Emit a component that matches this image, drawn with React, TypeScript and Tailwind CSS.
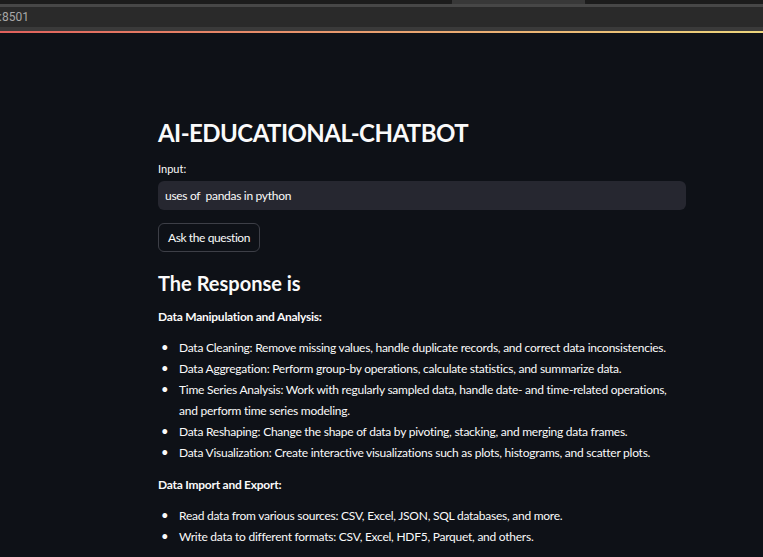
export default function App() {
  const items1 = [
    "Data Cleaning: Remove missing values, handle duplicate records, and correct data inconsistencies.",
    "Data Aggregation: Perform group-by operations, calculate statistics, and summarize data.",
    "Time Series Analysis: Work with regularly sampled data, handle date- and time-related operations, and perform time series modeling.",
    "Data Reshaping: Change the shape of data by pivoting, stacking, and merging data frames.",
    "Data Visualization: Create interactive visualizations such as plots, histograms, and scatter plots.",
  ];
  const items2 = [
    "Read data from various sources: CSV, Excel, JSON, SQL databases, and more.",
    "Write data to different formats: CSV, Excel, HDF5, Parquet, and others.",
  ];
  return (
    <div className="w-[763px] h-[557px] overflow-hidden bg-[#0e1117] font-['Lato',sans-serif] text-[#fafafa]">
      {/* browser chrome */}
      <div className="h-[4px] flex bg-[#1f1f1f]">
        <div className="w-[452px] bg-[#1c1c1c] rounded-br-[4px]" />
        <div className="w-[133px] bg-[#383838]" />
        <div className="flex-1 bg-[#1c1c1c] rounded-bl-[4px]" />
      </div>
      <div className="h-[3px] bg-[#474747]" />
      <div className="h-[20px] bg-[#2a2a2a] flex items-center">
        <span className="text-[12px] text-[#a8a8a8] font-['Roboto',sans-serif] leading-none -ml-[1px]">:8501</span>
      </div>
      <div className="h-[4px] bg-[#3a3a3a]" />
      <div className="h-[2px] bg-gradient-to-r from-[#e0605c] via-[#e8a070] to-[#ecd57c]" />

      {/* content */}
      <div className="pl-[158px]">
        <div className="w-[528px] flex flex-col">
          <h1 className="mt-[85px] text-[24px] leading-[30px] font-bold tracking-[-0.55px]">AI-EDUCATIONAL-CHATBOT</h1>
          <div className="mt-[14px] text-[11px] leading-[14px]">Input:</div>
          <div className="mt-[5px] h-[29px] rounded-[6px] bg-[#262730] flex items-center px-[7px] text-[12px] tracking-[-0.3px] whitespace-pre">uses of  pandas in python</div>
          <button className="mt-[13px] self-start h-[29px] w-[102px] rounded-[6px] border border-[#3d3f47] bg-transparent text-[12px] tracking-[-0.4px] text-[#fafafa]">Ask the question</button>
          <h2 className="mt-[19px] text-[20px] leading-[24px] font-bold">The Response is</h2>
          <div className="mt-[14px] text-[12px] leading-[16px] font-bold tracking-[-0.25px]">Data Manipulation and Analysis:</div>
          <ul className="mt-[12px] text-[12px] leading-[21px] tracking-[-0.25px] pl-[21px]">
            {items1.map((t) => (
              <li key={t} className="relative">
                <span className="absolute -left-[18px] top-0 text-[13px]">•</span>
                {t}
              </li>
            ))}
          </ul>
          <div className="mt-[14px] text-[12px] leading-[16px] font-bold tracking-[-0.25px]">Data Import and Export:</div>
          <ul className="mt-[12px] text-[12px] leading-[21px] tracking-[-0.25px] pl-[21px]">
            {items2.map((t) => (
              <li key={t} className="relative">
                <span className="absolute -left-[18px] top-0 text-[13px]">•</span>
                {t}
              </li>
            ))}
          </ul>
        </div>
      </div>
    </div>
  );
}
